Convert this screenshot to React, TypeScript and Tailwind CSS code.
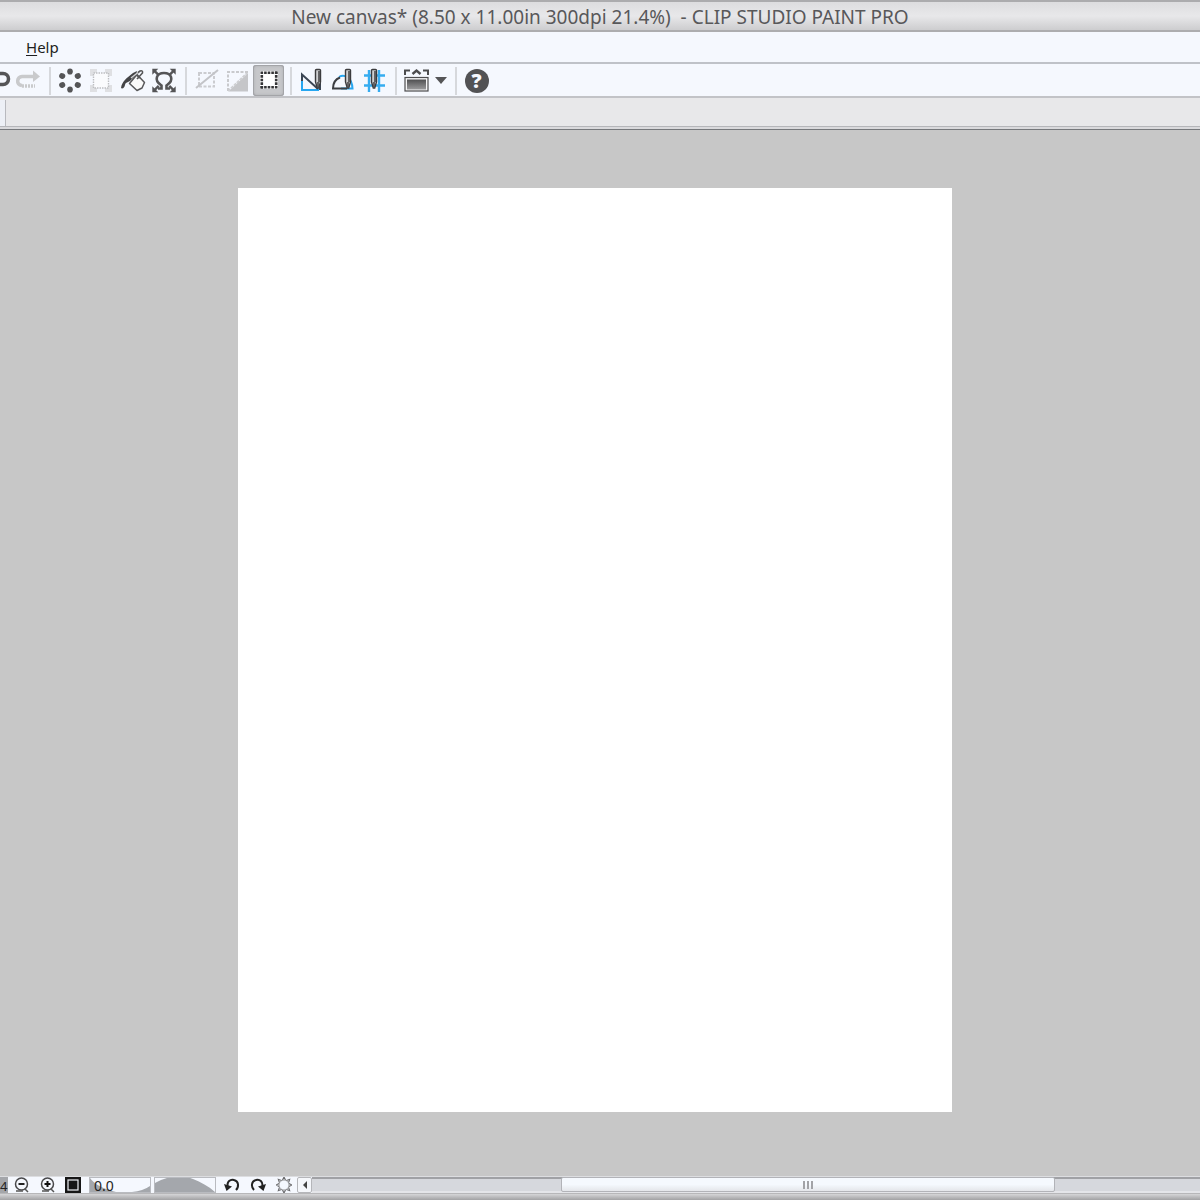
import type { ReactNode } from "react";

type IconProps = { children: ReactNode };

function Icon({ children }: IconProps) {
  return (
    <svg viewBox="0 0 31 31" width="31" height="31" fill="none" aria-hidden="true">
      {children}
    </svg>
  );
}

type ToolProps = { label: string; pressed?: boolean; disabled?: boolean; children: ReactNode };

function Tool({ label, pressed, disabled, children }: ToolProps) {
  return (
    <button
      type="button"
      aria-label={label}
      aria-pressed={pressed}
      disabled={disabled}
      className={
        pressed
          ? "flex h-[31px] w-[31px] shrink-0 items-center justify-center rounded-[3px] bg-[#c6c7ca] shadow-[inset_0_0_0_1px_#a3a4a8,inset_0_0_3px_1px_#aeafb3]"
          : "flex h-[31px] w-[31px] shrink-0 items-center justify-center"
      }
    >
      {children}
    </button>
  );
}

function Separator() {
  return <div className="mr-1 ml-1.5 h-7 w-0.5 shrink-0 bg-[#d6d8dc]" />;
}

const petals = [0, 60, 120, 180, 240, 300];
const rays = [0, 45, 90, 135, 180, 225, 270, 315];
const corners = [45, 135, 225, 315];
const steps = [0, 1, 2, 3, 4];

function Pen({ x }: { x: number }) {
  return (
    <g transform={`translate(${x} 0)`}>
      <path d="M-2.5 5.5 Q-2.5 4.500 -1.5 4.500 H1.5 Q2.5 4.500 2.5 5.5 V17 L0.7 23 H-0.7 L-2.5 17 Z" fill="#cfd0d2" stroke="#3c3c3e" strokeWidth="1.4" />
      <path d="M1 6 V17 M0 17 V23" stroke="#4a4a4c" strokeWidth="1.6" />
    </g>
  );
}

function Toolbar() {
  return (
    <div className="flex h-8 items-end overflow-hidden bg-[#f5f8fe]">
      <div className="-ml-[19px] flex items-center">
        <Tool label="Undo">
          <Icon>
            <path d="M12 8.5 H22 a5 5 0 0 1 0 11 H19" stroke="#555557" strokeWidth="3.5" />
          </Icon>
        </Tool>
        <Tool label="Redo" disabled>
          <Icon>
            <path d="M10 20.500 C3.500 19.500 5 11.500 10 11.500 H22" stroke="#c9cacc" strokeWidth="3.5" />
            <path d="M21 5.500 L28 11.500 L21 17 Z" fill="#c9cacc" />
            <path d="M10 21 H23" stroke="#c9cacc" strokeWidth="3.5" strokeDasharray="2 1" />
          </Icon>
        </Tool>
        <Separator />
        <Tool label="Clear">
          <Icon>
            {petals.map((a) => (
              <ellipse key={a} cx="15" cy="6.500" rx="2.8" ry="3.100" fill="#555557" transform={`rotate(${a} 15 15.500)`} />
            ))}
          </Icon>
        </Tool>
        <Tool label="Clear outside selection" disabled>
          <Icon>
            <path d="M4 4 h7 v7 h-7 Z M19 4 h7 v7 h-7 Z M4 20 h7 v7 h-7 Z M19 20 h7 v7 h-7 Z" fill="#dfe0e3" />
            <rect x="7.500" y="8" width="15" height="15" fill="#fafbfd" stroke="#bdbec1" strokeWidth="1.4" strokeDasharray="1.5 1" />
          </Icon>
        </Tool>
        <Tool label="Fill">
          <Icon>
            <path d="M20 9.500 L27.500 17.500 L25 23 L20 25.500 L12.500 18.500 Z" fill="#fafafa" stroke="#58585a" strokeWidth="1.5" strokeLinejoin="round" />
            <path d="M4 23 C5 16 10 13 16 8 L20 6 L19 10 L13 16 L9 18 C7.500 19 8.500 23 5 23.500 Z" fill="#444446" />
            <path d="M14 13 L23 6 Q26 5 25.500 8 L20 14 M18 9 L23 13" stroke="#555557" strokeWidth="1.6" />
            <path d="M14 13 L21 7.500" stroke="#d7d8da" strokeWidth="1.2" />
          </Icon>
        </Tool>
        <Tool label="Transform">
          <Icon>
            <path d="M10 23.500 H13.500 V20.500 C5 15 9 8 16 8 C23 8 27 15 18.500 20.500 V23.500 H22" stroke="#555557" strokeWidth="2.600" />
            {corners.map((a) => (
              <g key={a} transform={`rotate(${a} 16 15.500)`}>
                <path d="M16 -1 L20.200 3.200 L11.800 3.200 Z" fill="#555557" />
                <path d="M16 2 V8" stroke="#555557" strokeWidth="2.400" />
              </g>
            ))}
          </Icon>
        </Tool>
        <Separator />
        <Tool label="Deselect" disabled>
          <Icon>
            <rect x="8" y="8" width="15" height="13.500" stroke="#cbccd0" strokeWidth="2" strokeDasharray="3 1.500" />
            <path d="M5 23 L27 5" stroke="#c3c4c8" strokeWidth="2" />
          </Icon>
        </Tool>
        <Tool label="Invert selected area" disabled>
          <Icon>
            <path d="M6 26 V7 H26" stroke="#c9cacd" strokeWidth="2" strokeDasharray="3 1.500" />
            <path d="M6 26 L25 8" stroke="#cdced1" strokeWidth="1.600" strokeDasharray="3 1" />
            <path d="M26 8 V26.500 H6.500 Z" fill="#c5c6c9" />
          </Icon>
        </Tool>
        <Tool label="Show border of selected area" pressed>
          <Icon>
            <rect x="7" y="6" width="18" height="18" fill="#fff" />
            {steps.map((i) => (
              <path
                key={i}
                d={`M${7.5 + i * 3.6} 6.500 h2.600 v2.600 h-2.600 Z m0 14.400 h2.600 v2.600 h-2.600 Z M7.500 ${6.5 + i * 3.6} h2.600 v2.600 h-2.600 Z m14.400 0 h2.600 v2.600 h-2.600 Z`}
                fill="#353537"
              />
            ))}
          </Icon>
        </Tool>
        <Separator />
        <Tool label="Snap to ruler">
          <Icon>
            <path d="M6 10 V25 H23" stroke="#27a7f1" strokeWidth="2" />
            <path d="M6 16 V9.500 L22 24 M24 25 V18" stroke="#3b4654" strokeWidth="2" />
            <Pen x={22} />
          </Icon>
        </Tool>
        <Tool label="Snap to special ruler">
          <Icon>
            <path d="M12 12 C17 9 25 12 25.500 23.500 H14" stroke="#27a7f1" strokeWidth="2" />
            <path d="M20 23.500 H6 C6 18 9 14 13 12.500" stroke="#3c3e42" strokeWidth="2" />
            <Pen x={21} />
          </Icon>
        </Tool>
        <Tool label="Snap to grid">
          <Icon>
            <path d="M11 5 V27 M21 5 V27 M6 10.500 H27 M6 20.500 H27" stroke="#35acf0" strokeWidth="2.400" />
            <Pen x={16} />
          </Icon>
        </Tool>
        <Separator />
        <Tool label="Show command bar">
          <Icon>
            <defs>
              <linearGradient id="screen" x1="0" y1="0" x2="0" y2="1">
                <stop offset="0" stopColor="#4f4f51" />
                <stop offset="1" stopColor="#9a9a9c" />
              </linearGradient>
            </defs>
            <path d="M4 10 V5.500 H9 M22 5.500 H27 V10" stroke="#4c4c4e" strokeWidth="2" />
            <path d="M11.500 9 L15.500 5.500 L19.500 9" stroke="#4c4c4e" strokeWidth="2.400" />
            <rect x="4" y="12.500" width="23" height="13.500" fill="#f4f4f6" stroke="#4c4c4e" strokeWidth="1.200" />
            <rect x="6" y="14.500" width="19" height="10" fill="url(#screen)" />
          </Icon>
        </Tool>
        <button type="button" aria-label="Command bar options" className="flex h-[31px] w-[17px] items-center justify-center">
          <svg viewBox="0 0 12 7" width="12" height="7" aria-hidden="true">
            <path d="M0 0 H12 L6 7 Z" fill="#555557" />
          </svg>
        </button>
        <Separator />
        <Tool label="Help">
          <span className="flex h-6 w-6 items-center justify-center rounded-full bg-[#525254] text-xl leading-6 font-black text-[#f5f8fe]">
            ?
          </span>
        </Tool>
      </div>
    </div>
  );
}

function StatusButton({ label, children }: { label: string; children: ReactNode }) {
  return (
    <button type="button" aria-label={label} className="flex h-4 w-[26px] shrink-0 items-center justify-center">
      <svg viewBox="0 0 16 16" width="16" height="16" fill="none" aria-hidden="true">
        {children}
      </svg>
    </button>
  );
}

function StatusBar() {
  return (
    <footer>
      <div className="flex h-4 overflow-hidden bg-[#f5f8fe] shadow-[0_-1px_0_#dcdde0]">
        <output className="h-4 w-2 shrink-0 bg-[#a4a6aa] text-[13px] leading-[18px] text-[#222]">4</output>
        <StatusButton label="Zoom out">
          <circle cx="8.500" cy="7" r="6" fill="#f5f8fe" stroke="#48484a" strokeWidth="1.500" />
          <path d="M5.500 7 H11.500" stroke="#222" strokeWidth="2" />
          <path d="M12 12 L15 15 M3 14 H10" stroke="#555" strokeWidth="1.500" />
        </StatusButton>
        <StatusButton label="Zoom in">
          <circle cx="8.500" cy="7" r="6" fill="#f5f8fe" stroke="#48484a" strokeWidth="1.500" />
          <path d="M5.500 7 H11.500 M8.500 4 V10" stroke="#111" strokeWidth="2" />
          <path d="M12 12 L15 15 M3 14 H10" stroke="#555" strokeWidth="1.500" />
        </StatusButton>
        <StatusButton label="Fit to screen">
          <path d="M0 0 H16 V16 H0 Z" fill="#161616" />
          <rect x="3" y="3" width="10" height="10" stroke="#eef1f5" strokeWidth="1.200" />
        </StatusButton>
        <div className="relative ml-[3px] h-4 w-[62px] shrink-0 border border-[#b9bbc0]">
          <svg viewBox="0 0 60 14" width="60" height="14" aria-hidden="true">
            <path d="M0 0 Q6 9 26 14 H0 Z M42 14 Q53 13 60 8 V14 Z" fill="#a4a7ac" />
          </svg>
          <input
            type="text"
            aria-label="Rotation angle"
            defaultValue="0.0"
            className="absolute top-0 left-1 h-4 w-8 bg-transparent text-sm leading-4 text-[#222]"
          />
        </div>
        <div className="ml-[3px] h-4 w-[62px] shrink-0 border border-[#b9bbc0]">
          <svg viewBox="0 0 60 14" width="60" height="14" aria-hidden="true">
            <path d="M0 5 C14 -3 28 -3 38 1 C46 4 53 8 60 14 H0 Z" fill="#a4a7ac" />
          </svg>
        </div>
        <div className="ml-[3px] flex">
          <StatusButton label="Rotate left">
            <path d="M4 11 C2 4 7 2 10 3 C15 4 15 10 12 13" stroke="#222" strokeWidth="2" />
            <path d="M0 7 L8 9.500 L2.500 14 Z" fill="#222" />
          </StatusButton>
          <StatusButton label="Rotate right">
            <path d="M12 11 C14 4 9 2 6 3 C1 4 1 10 4 13" stroke="#222" strokeWidth="2" />
            <path d="M16 7 L8 9.500 L13.500 14 Z" fill="#222" />
          </StatusButton>
          <StatusButton label="Reset rotation">
            <circle cx="8" cy="8" r="5" stroke="#a5a5a7" strokeWidth="1" />
            {rays.map((a) => (
              <path key={a} d="M6.500 3 L8 0 L9.500 3" stroke="#69696b" strokeWidth="1.100" transform={`rotate(${a} 8 8)`} />
            ))}
          </StatusButton>
        </div>
        <button
          type="button"
          aria-label="Scroll left"
          className="flex h-4 w-[15px] shrink-0 items-center justify-center rounded-[2px] border border-[#b5b6ba] bg-[#f5f7fb]"
        >
          <svg viewBox="0 0 4 8" width="4" height="8" aria-hidden="true">
            <path d="M4 0 V8 L0 4 Z" fill="#444" />
          </svg>
        </button>
        <div className="h-4 flex-1 border-t-2 border-b-2 border-t-[#a0a1a5] border-b-[#e4e5e9] bg-[#d6d8dd]">
          <div className="-mt-0.5 ml-[28%] flex h-[15px] w-[55.7%] items-center justify-center gap-0.5 rounded-[2px] border border-[#b2b3b8] bg-linear-to-b from-[#f5f9fe] from-50% to-[#e4e6ea]">
            <span className="h-2 w-0.5 bg-[#a2a3a7]" />
            <span className="h-2 w-0.5 bg-[#a2a3a7]" />
            <span className="h-2 w-0.5 bg-[#a2a3a7]" />
          </div>
        </div>
      </div>
      <div className="h-[7px] border-t border-[#b7b7b9] bg-linear-to-b from-[#d6d6d8] to-[#a2a2a4]" />
    </footer>
  );
}

export default function App() {
  return (
    <div className="flex min-h-screen flex-col bg-[#c7c7c7] font-['Noto_Sans',sans-serif]">
      <header>
        <div className="flex h-8 items-center justify-center border-t-2 border-b-2 border-t-[#acacae] border-b-[#adadaf] bg-linear-to-b from-[#dddddf] via-[#e8e8ea] to-[#cdcdcf]">
          <h1 className="pt-0.5 text-[19px] leading-7 whitespace-pre text-[#58585a]">
            {"New canvas* (8.50 x 11.00in 300dpi 21.4%)  - CLIP STUDIO PAINT PRO"}
          </h1>
        </div>
        <nav className="flex h-8 items-center border-b-2 border-[#bfc2c8] bg-[#f5f8fe] pl-[26px]">
          <button type="button" className="text-[15px] text-[#1e1e20]">
            <span className="underline underline-offset-2">H</span>elp
          </button>
        </nav>
        <Toolbar />
        <div className="h-[31px] border-t-2 border-b border-t-[#c2c3c7] border-b-[#b5b6ba] bg-[#e8e8ea]">
          <div className="mt-0.5 h-[26px] w-1.5 border-r border-[#b8b9be] bg-[#edf0f6]" />
        </div>
        <div className="h-[3px] border-b border-[#76787c] bg-[#d9d9dc]" />
      </header>
      <main className="flex flex-1 items-start justify-center pt-[58px] pr-[10px] pb-8">
        <div className="aspect-[17/22] w-[60%] bg-white" />
      </main>
      <StatusBar />
    </div>
  );
}
